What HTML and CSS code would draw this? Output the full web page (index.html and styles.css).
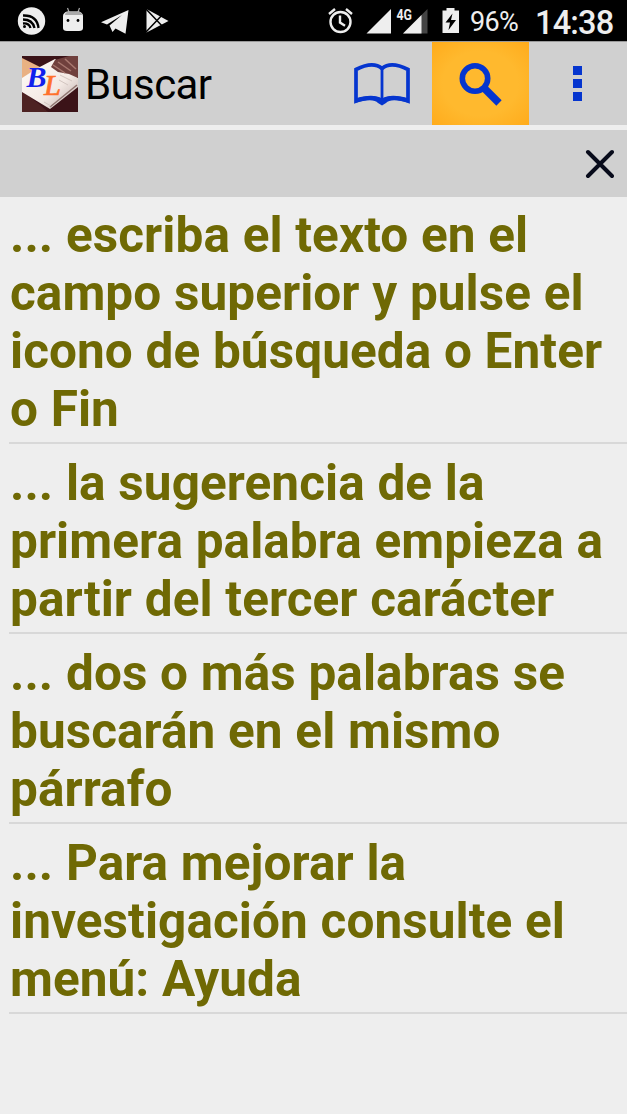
FILE: index.html
```html
<!DOCTYPE html>
<html lang="es">
<head>
<meta charset="utf-8">
<title>Buscar</title>
<link rel="stylesheet" href="styles.css">
</head>
<body>
<header class="status">
  <svg class="notifications" width="180" height="41" viewBox="0 0 180 41">
    <circle cx="31.5" cy="21" r="13.7" fill="#eee"/>
    <g fill="none" stroke="#000" stroke-width="2.3">
      <path d="M23 15.5Q37 15 38.5 28"/><path d="M23 19.5Q32.500 19.500 34.500 28"/><path d="M23 23.500Q29 23 30.500 28"/>
    </g>
    <circle cx="24.500" cy="26.500" r="1.500"/>
    <path d="M67.500 8l1.500 4M79.500 8l-1.500 4" stroke="#aaa" stroke-width="1.200"/>
    <path d="M63 16q0-3 4-4.500h12q4 1.500 4 4.500v12q0 3-4 3H67q-4 0-4-3z" fill="#eee"/>
    <path d="M65 15q0-3 3.500-3.500h10q3.500.5 3.500 3.500z" fill="#aaa"/>
    <circle cx="68" cy="20.500" r="1.400"/><circle cx="78" cy="20.500" r="1.400"/>
    <path d="M101 22.300L128.500 10 125.500 33.800 115.500 28.500 112.500 32 109.500 25.500 122 15 107 24.500z" fill="#eee"/>
    <path d="M146.500 9L168.500 21 146.500 32.500z" fill="#eee"/>
    <path d="M146 9L164 28M146 32L164 13" stroke="#000" stroke-width="1.500"/>
  </svg>
  <svg class="system" width="147" height="41" viewBox="322 0 147 41">
    <g fill="none" stroke="#eee" stroke-width="2.400">
      <circle cx="340.500" cy="22" r="10"/><path d="M340 15.500V22.500l5 3.200M329 14l6-5M352 14l-6-5"/>
    </g>
    <path d="M366.500 33.500L391 9v24.500z" fill="#eee"/>
    <path d="M403 33.500L427.500 9v24.500z" fill="#444"/>
    <path d="M396 8h17v13h-17z"/>
    <path d="M403 33.500L421.500 15v18.500z" fill="#eee"/>
    <text class="network" x="396.500" y="19.500" textLength="15.500" lengthAdjust="spacingAndGlyphs">4G</text>
    <path d="M442.500 10.500h4V8h8v2.500h4.500V33h-16.500z" fill="#eee"/>
    <path d="M452.500 13.500l-7 9h4.500l-1.500 7.500 7.500-10h-5z"/>
  </svg>
  <span class="battery">96%</span>
  <span class="clock">14:38</span>
</header>
<div class="toolbar">
  <svg class="logo" width="56" height="56" viewBox="0 0 56 56">
    <defs>
      <linearGradient id="page" x1="0" y1="0" x2="1" y2="1"><stop offset="0" stop-color="#fffdf9"/><stop offset=".6" stop-color="#f3e9e4"/><stop offset="1" stop-color="#b9a9a7"/></linearGradient>
      <filter id="soft"><feGaussianBlur stdDeviation=".7"/></filter>
    </defs>
    <rect width="56" height="56" fill="#3b1318"/>
    <g filter="url(#soft)">
      <path d="M0 2L18 11 0 23z" fill="#e9b183"/>
      <path d="M0 35L17 48 26 56H0z" fill="#4d2024"/>
      <path d="M0 22L14 13 33 3 56 22V31L28 53 0 36z" fill="url(#page)"/>
      <path d="M33 4L47 0H56V22L47 18 36 16 29 11z" fill="#70413e"/>
      <path d="M36 6L49 15M31 9L43 17M43 3L54 13" stroke="#a8776f" stroke-width="1.500"/>
      <path d="M28 51L55 29" stroke="#8e7470" stroke-width="1.500"/>
      <path d="M37 24L46 29M38 19L50 25M22 46L29 50" stroke="#d3c6c1" stroke-width="1"/>
    </g>
    <text class="logo-b" x="4.500" y="31" textLength="20" lengthAdjust="spacingAndGlyphs">B</text>
    <text class="logo-l" x="22" y="39" textLength="17" lengthAdjust="spacingAndGlyphs">L</text>
  </svg>
  <h1 class="title">Buscar</h1>
  <div class="action book">
    <svg width="58" height="46" viewBox="0 0 58 46">
      <path d="M3 8.500Q20 0 29 7.500Q38 0 55 8.500V40Q38 33.500 29 40.500Q20 33.500 3 40z" fill="none" stroke="#0535cf" stroke-width="3.700"/>
      <path d="M29 7v34" stroke="#0535cf" stroke-width="2.800"/>
      <path d="M2 37.500Q20 32 29 37.500Q38 32 56 37.500V42Q38 36.500 33 42L29 44.500 25 42Q20 36.500 2 42z" fill="#0535cf"/>
    </svg>
  </div>
  <div class="action search">
    <svg width="46" height="46" viewBox="0 0 46 46">
      <circle cx="17" cy="17.500" r="12.700" fill="none" stroke="#0535cf" stroke-width="5.600"/>
      <path d="M25 26L41 42" stroke="#0535cf" stroke-width="7.500"/>
    </svg>
  </div>
  <div class="action more"><i class="dot"></i><i class="dot"></i><i class="dot"></i></div>
</div>
<div class="field">
  <svg width="30" height="30" viewBox="0 0 30 30"><path d="M4 3L28 27M28 3L4 27" stroke="#080b1b" stroke-width="4" stroke-linecap="round"/></svg>
</div>
<main class="tips">
  <p class="tip">... escriba el texto en el<br>campo superior y pulse el<br>icono de búsqueda o Enter<br>o Fin</p>
  <p class="tip">... la sugerencia de la<br>primera palabra empieza a<br>partir del tercer carácter</p>
  <p class="tip">... dos o más palabras se<br>buscarán en el mismo<br>párrafo</p>
  <p class="tip">... Para mejorar la<br>investigación consulte el<br>menú: Ayuda</p>
</main>
</body>
</html>
```

FILE: styles.css
```css
* { box-sizing: border-box; }
body { margin: 0; height: 1114px; overflow: hidden; background: #eee; font-family: Roboto, sans-serif; }
svg { display: block; flex: none; }
.status { display: flex; height: 41px; background: #000; color: #eee; }
.system { margin-left: 142px; }
.network { font: 700 14px Roboto, sans-serif; fill: #eee; }
.battery { width: 66px; padding-left: 1px; font-size: 27px; line-height: 44px; letter-spacing: -.7px; }
.clock { font-size: 32.5px; font-weight: 500; line-height: 47px; letter-spacing: -.8px; white-space: nowrap; }
.toolbar { display: flex; align-items: center; height: 84px; padding-left: 22px; background: #d0d0d0; border-top: 1px solid #999; }
.logo-b, .logo-l { font: italic 700 30px "Liberation Serif", serif; }
.logo-b { fill: #1020ed; }
.logo-l { fill: #ff702b; stroke: #ff702b; stroke-width: .7px; font-weight: 400; }
.title { width: 256px; margin: 0; padding: 3px 0 0 7px; font-size: 42px; font-weight: 400; line-height: 50px; letter-spacing: -.6px; }
.action { display: flex; flex: none; justify-content: center; align-items: center; height: 83px; }
.book { width: 97px; padding-right: 1px; margin-right: 1px; }
.search { width: 97px; background: radial-gradient(ellipse, #ffb92e 55%, #ffa817 110%); }
.more { width: 97px; flex-direction: column; gap: 4px; }
.dot { width: 9px; height: 9px; background: #0535cf; }
.field { display: flex; justify-content: flex-end; align-items: center; height: 67px; margin-top: 5px; padding-right: 13px; background: #d0d0d0; }
.tips { margin-top: -1px; }
.tip { margin: 0 0 0 9px; padding: 10px 0 4px 1px; border-bottom: 2px solid #d8d8d8; color: #6f6904; font-size: 49.5px; font-weight: 700; line-height: 58px; letter-spacing: .07px; word-spacing: .3px; white-space: nowrap; }
```
